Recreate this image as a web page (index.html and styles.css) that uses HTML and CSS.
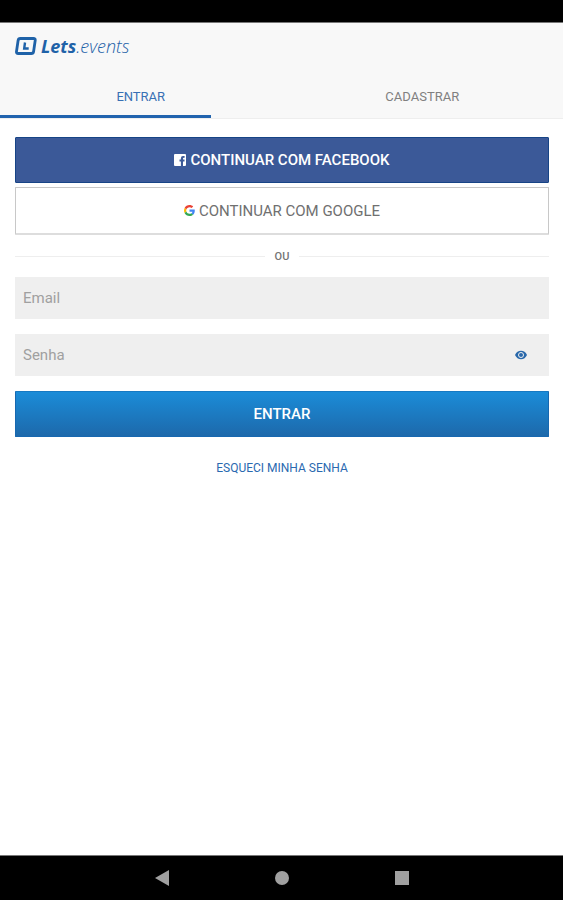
FILE: index.html
```html
<!DOCTYPE html>
<html lang="pt-BR">
<head>
<meta charset="utf-8">
<meta name="viewport" content="width=device-width, initial-scale=1">
<title>Lets.events</title>
<link rel="stylesheet" href="styles.css">
</head>
<body>
<div class="status-bar"></div>
<header class="header">
  <a class="logo" href="#">
    <svg class="logo-mark" viewBox="0 0 22 18" aria-hidden="true">
      <path d="M5.3 1.5h13.2q2 0 1.7 2l-1.6 11q-.3 2-2.300 2H3.200q-2 0-1.700-2l1.600-11q.3-2 2.200-2z" fill="none" stroke="#1f62a8" stroke-width="2.800"/>
      <path d="M10 5.500 9.200 11.500h4.500" fill="none" stroke="#1f62a8" stroke-width="2.400"/>
    </svg>
    <span class="logo-text"><b>Lets</b><span class="logo-light">.events</span></span>
  </a>
  <nav class="tabs">
    <a class="tab tab-active" href="#entrar">ENTRAR</a>
    <a class="tab" href="#cadastrar">CADASTRAR</a>
  </nav>
  <div class="track"><div class="indicator"></div></div>
</header>
<main class="content">
  <button class="button facebook" type="button">
    <svg class="icon-facebook" viewBox="0 0 12 12" aria-hidden="true">
      <path d="M1 0h10q1 0 1 1v10q0 1-1 1H9V7.500h1.500V5.600H9V4.500q0-.8.8-.8h.8V2H9Q6.900 2 6.900 4.200v1.400H5.500v1.900h1.400V12H1q-1 0-1-1V1q0-1 1-1z" fill="#fff"/>
    </svg>
    CONTINUAR COM FACEBOOK
  </button>
  <button class="button google" type="button">
    <svg class="icon-google" viewBox="0 0 48 48" aria-hidden="true">
      <path fill="#ea4335" d="M24 9.500c3.540 0 6.710 1.220 9.210 3.600l6.850-6.850C35.900 2.380 30.470 0 24 0 14.620 0 6.510 5.380 2.560 13.220l7.980 6.190C12.430 13.720 17.740 9.500 24 9.500z"/>
      <path fill="#4285f4" d="M46.980 24.550c0-1.570-.15-3.090-.38-4.550H24v9.020h12.940c-.58 2.960-2.260 5.480-4.780 7.180l7.730 6c4.510-4.180 7.090-10.360 7.090-17.650z"/>
      <path fill="#fbbc05" d="M10.530 28.590c-.48-1.450-.76-2.990-.76-4.590s.27-3.140.76-4.590l-7.980-6.190C.92 16.460 0 20.120 0 24s.92 7.540 2.560 10.780z"/>
      <path fill="#34a853" d="M24 48c6.480 0 11.930-2.130 15.890-5.810l-7.730-6c-2.150 1.450-4.920 2.300-8.160 2.300-6.260 0-11.570-4.220-13.470-9.910l-7.980 6.190C6.510 42.620 14.620 48 24 48z"/>
    </svg>
    CONTINUAR COM GOOGLE
  </button>
  <div class="divider">OU</div>
  <form class="form">
    <div class="field">
      <input class="input" type="email" placeholder="Email" aria-label="Email">
    </div>
    <div class="field">
      <input class="input" type="password" placeholder="Senha" aria-label="Senha">
      <button class="reveal" type="button" aria-label="Mostrar senha">
        <svg viewBox="0 0 12 10" aria-hidden="true">
          <path d="M0 5Q2 .8 6 .8T12 5Q10 9.200 6 9.200T0 5z" fill="#2a69ab"/>
          <circle cx="6" cy="5" r="2.500" fill="none" stroke="#efefef" stroke-width="1"/>
        </svg>
      </button>
    </div>
    <button class="button submit" type="submit">ENTRAR</button>
  </form>
  <a class="forgot" href="#senha">ESQUECI MINHA SENHA</a>
</main>
<footer class="system-nav">
  <button class="key" type="button" aria-label="Voltar"><svg viewBox="0 0 16 16"><path d="M1 8 15 0v16z" fill="#a0a0a0"/></svg></button>
  <button class="key" type="button" aria-label="Início"><svg viewBox="0 0 16 16"><circle cx="8" cy="8" r="7" fill="#a0a0a0"/></svg></button>
  <button class="key" type="button" aria-label="Recentes"><svg viewBox="0 0 16 16"><path d="M1 1h14v14H1z" fill="#a0a0a0"/></svg></button>
</footer>
</body>
</html>
```
FILE: styles.css
```css
* {
  box-sizing: border-box;
}

body {
  margin: 0;
  min-height: 100vh;
  display: flex;
  flex-direction: column;
  background: #fff;
  color: #757575;
  font-family: Roboto, "Liberation Sans", sans-serif;
}

button,
input {
  margin: 0;
  border: 0;
  font-family: inherit;
}

a {
  text-decoration: none;
}

svg {
  display: block;
}

.status-bar {
  height: 23px;
  background: #000;
  border-bottom: 1px solid #777;
}

.header {
  background: #f8f8f8;
}

.logo {
  display: flex;
  align-items: center;
  gap: 4px;
  height: 46px;
  padding: 0 15px;
  color: #1f62a8;
}

.logo-mark {
  width: 22px;
  height: 18px;
}

.logo-text {
  font-family: "Open Sans", "Noto Sans", sans-serif;
  font-size: 18px;
  font-style: italic;
  line-height: 24px;
}

.logo-text b {
  font-weight: 700;
}

.logo-light {
  font-weight: 300;
}

.tabs {
  display: grid;
  grid-template-columns: 1fr 1fr;
}

.tab {
  height: 46px;
  color: #808080;
  font-size: 13px;
  line-height: 56px;
  text-align: center;
}

.tab-active {
  color: #3870b4;
}

.track {
  border-bottom: 1px solid #eee;
}

.indicator {
  width: 37.5%;
  height: 3px;
  background: #2163ae;
}

.content {
  flex: 1;
  display: flex;
  flex-direction: column;
  padding: 18px 14px 0 15px;
}

.button {
  display: flex;
  align-items: center;
  justify-content: center;
  gap: 4px;
  width: 100%;
  height: 46px;
  border-radius: 1px;
  font-size: 15px;
  font-weight: 500;
}

.facebook {
  background: #3b5998;
  border: 1px solid #174486;
  color: #fff;
}

.google {
  height: 48px;
  margin-top: 4px;
  background: #fff;
  border: 1px solid #c8c8c8;
  border-bottom: 2px solid #ddd;
  color: #707070;
  font-weight: 400;
}

.icon-facebook {
  width: 12px;
  height: 12px;
}

.icon-google {
  width: 11px;
  height: 11px;
}

.divider {
  display: flex;
  align-items: center;
  gap: 10px;
  height: 42px;
  font-size: 11px;
  font-weight: 500;
}

.divider::before,
.divider::after {
  content: "";
  flex: 1;
  height: 1px;
  background: #eee;
}

.form {
  display: flex;
  flex-direction: column;
  gap: 15px;
}

.field {
  display: flex;
  height: 42px;
  background: #efefef;
}

.input {
  flex: 1;
  min-width: 0;
  padding: 0 8px;
  background: transparent;
  color: #555;
  font-size: 15px;
}

.input::placeholder {
  color: #a0a0a0;
}

.reveal {
  display: flex;
  align-items: center;
  justify-content: center;
  width: 56px;
  padding: 0;
  background: transparent;
}

.reveal svg {
  width: 12px;
  height: 10px;
}

.submit {
  border: 1px solid #1768b0;
  border-top-color: #1779c2;
  background: linear-gradient(#1b8cd8, #1d69ab);
  color: #fff;
}

.forgot {
  align-self: center;
  margin-top: 23px;
  color: #2a69b0;
  font-size: 12px;
  line-height: 16px;
}

.system-nav {
  display: flex;
  justify-content: center;
  gap: 80px;
  height: 45px;
  background: #000;
  border-top: 1px solid #777;
}

.key {
  display: flex;
  align-items: center;
  justify-content: center;
  width: 40px;
  padding: 0;
  background: transparent;
}

.key svg {
  width: 16px;
  height: 16px;
}
```
